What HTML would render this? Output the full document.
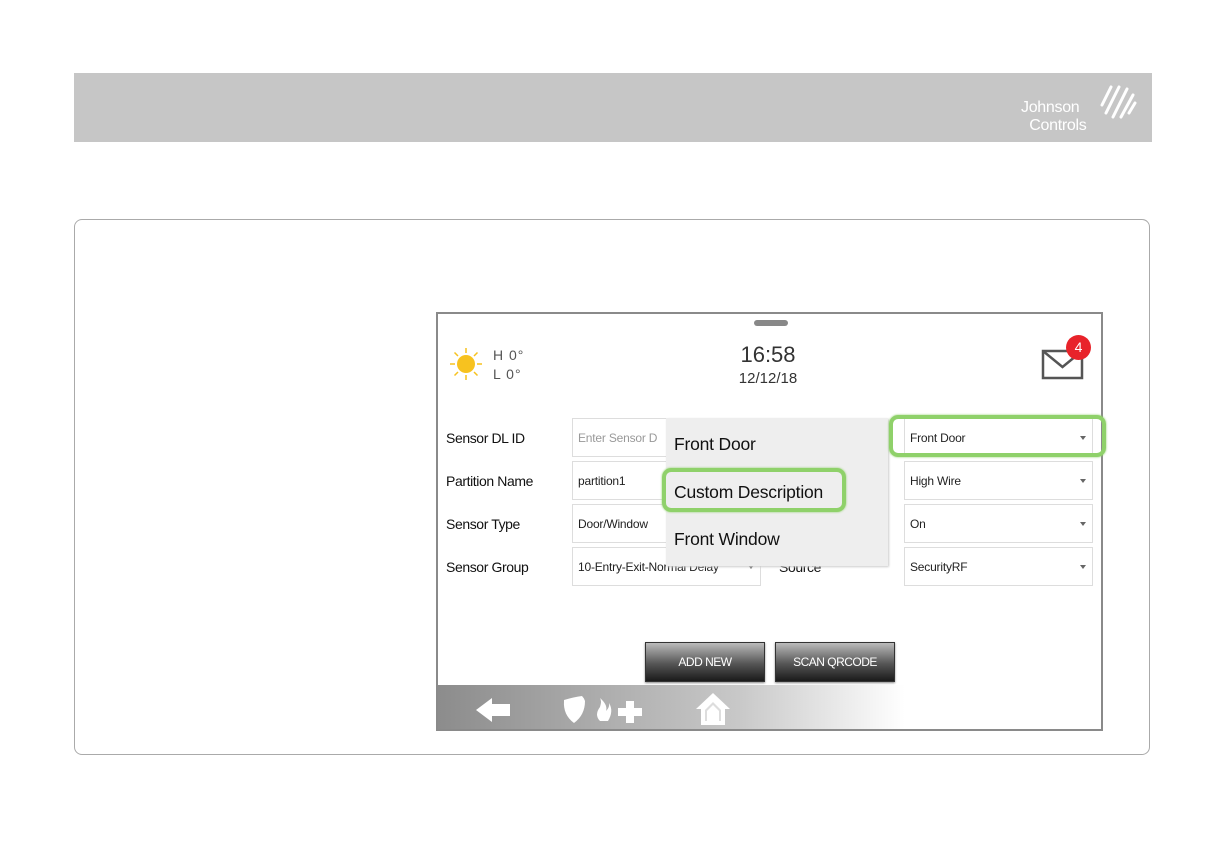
<!DOCTYPE html>
<html><head><meta charset="utf-8"><style>
*{margin:0;padding:0;box-sizing:border-box}
body{width:1224px;height:864px;background:#fff;position:relative;font-family:"Liberation Sans",sans-serif;overflow:hidden}
.a{position:absolute}
.hdr{left:74px;top:73px;width:1078px;height:69px;background:#c6c6c6}
.card{left:74px;top:219px;width:1076px;height:536px;border:1px solid #aaa;border-radius:8px}
.scr{left:436px;top:312px;width:667px;height:419px;border:2px solid #8a8a8a;background:#fff;overflow:hidden}
.lbl{font-size:14px;color:#111;letter-spacing:-0.4px}
.box{border:1px solid #ddd;background:#fff;font-size:12px;color:#222;padding-left:5px;display:flex;align-items:center;letter-spacing:-0.2px}
.car{position:absolute;right:6px;top:17px;border-left:3px solid transparent;border-right:3px solid transparent;border-top:4px solid #666}
.btn{background:linear-gradient(#bbb,#555 55%,#1a1a1a);color:#fff;font-size:12px;display:flex;align-items:center;justify-content:center;border:1px solid #333;letter-spacing:-0.5px;box-shadow:0 1px 2px #888}
.mi{font-size:17.5px;color:#111;left:8px;letter-spacing:-0.2px}
</style></head><body>
<div class="a hdr"></div>
<div class="a" style="left:1021px;top:99px;color:#fff;font-size:16px;line-height:18px;letter-spacing:-0.3px">Johnson<br>&nbsp;&nbsp;Controls</div>
<svg class="a" style="left:1097px;top:83px" width="40" height="38" viewBox="0 0 40 38"><g stroke="#fff" stroke-width="3" fill="none" stroke-linecap="round"><path d="M5 22 L14 4"/><path d="M9 30 L22 4"/><path d="M16 34 L30 6"/><path d="M24 34 L36 12"/><path d="M32 30 L38 20"/></g></svg>
<div class="a card"></div>
<div class="a scr">
 <div class="a" style="left:316px;top:6px;width:34px;height:6px;border-radius:3px;background:#888"></div>
 <svg class="a" style="left:10px;top:32px" width="36" height="36" viewBox="0 0 36 36"><circle cx="18" cy="18" r="9" fill="#f7c21f"/><g stroke="#f7c21f" stroke-width="1.5"><path d="M18 2v5M18 29v5M2 18h5M29 18h5M6.5 6.5l3.5 3.5M26 26l3.5 3.5M6.5 29.5l3.5-3.5M26 10l3.5-3.5"/></g></svg>
 <div class="a" style="left:55px;top:32px;font-size:14px;color:#555;line-height:19px;letter-spacing:1px">H 0°<br>L 0°</div>
 <div class="a" style="left:290px;top:28px;width:80px;text-align:center;font-size:22px;color:#333">16:58</div>
 <div class="a" style="left:290px;top:56px;width:80px;text-align:center;font-size:15px;color:#333">12/12/18</div>
 <svg class="a" style="left:603px;top:34px" width="44" height="32" viewBox="0 0 44 32"><rect x="2" y="3" width="39" height="27" fill="none" stroke="#555" stroke-width="2.5"/><path d="M2 3 L21.5 19 L41 3" fill="none" stroke="#555" stroke-width="2.5"/></svg>
 <div class="a" style="left:628px;top:21px;width:25px;height:25px;border-radius:50%;background:#e8232a;color:#fff;font-size:14px;text-align:center;line-height:25px">4</div>
 <div class="a lbl" style="left:8px;top:116px">Sensor DL ID</div>
 <div class="a lbl" style="left:8px;top:159px">Partition Name</div>
 <div class="a lbl" style="left:8px;top:202px">Sensor Type</div>
 <div class="a lbl" style="left:8px;top:245px">Sensor Group</div>
 <div class="a box" style="left:134px;top:104px;width:189px;height:39px;color:#999">Enter Sensor D</div>
 <div class="a box" style="left:134px;top:147px;width:189px;height:39px">partition1</div>
 <div class="a box" style="left:134px;top:190px;width:189px;height:39px">Door/Window</div>
 <div class="a box" style="left:134px;top:233px;width:189px;height:39px">10-Entry-Exit-Normal Delay<span class="car"></span></div>
 <div class="a lbl" style="left:341px;top:245px">Source</div>
 <div class="a box" style="left:466px;top:104px;width:189px;height:39px">Front Door<span class="car"></span></div>
 <div class="a box" style="left:466px;top:147px;width:189px;height:39px">High Wire<span class="car"></span></div>
 <div class="a box" style="left:466px;top:190px;width:189px;height:39px">On<span class="car"></span></div>
 <div class="a box" style="left:466px;top:233px;width:189px;height:39px">SecurityRF<span class="car"></span></div>
 <div class="a" style="left:228px;top:104px;width:222px;height:148px;background:#eee;box-shadow:1px 1px 2px #ccc">
  <div class="a mi" style="top:16px">Front Door</div>
  <div class="a mi" style="top:64px">Custom Description</div>
  <div class="a mi" style="top:111px">Front Window</div>
 </div>
 <div class="a" style="left:224px;top:154px;width:184px;height:44px;border:4px solid #8fd16a;border-radius:9px;box-shadow:0 0 2px #8fd16a"></div>
 <div class="a btn" style="left:207px;top:328px;width:120px;height:40px">ADD NEW</div>
 <div class="a btn" style="left:337px;top:328px;width:120px;height:40px">SCAN QRCODE</div>
 <div class="a" style="left:0;top:371px;width:667px;height:46px;background:linear-gradient(90deg,#8c8c8c,#c8c8c8 45%,#fff 70%)"></div>
 <svg class="a" style="left:36px;top:381px" width="40" height="30" viewBox="0 0 40 30"><path d="M2 15 L18 3 L18 9 L36 9 L36 21 L18 21 L18 27 Z" fill="#fff"/></svg>
 <svg class="a" style="left:124px;top:381px" width="90" height="30" viewBox="0 0 90 30"><path d="M2 5 Q12 2 20 1 Q22 3 23 6 Q23 20 12 28 Q1 20 2 6Z" fill="#fff"/><path d="M38 26 Q32 20 38 12 Q40 6 38 3 Q46 10 44 16 Q48 12 47 8 Q52 16 46 26 Z" fill="#fff"/><path d="M64 6h8v7h8v8h-8v7h-8v-7h-8v-8h8z" fill="#fff"/></svg>
 <svg class="a" style="left:256px;top:377px" width="38" height="36" viewBox="0 0 38 36"><path d="M19 2 L36 18 L31 18 L31 34 L7 34 L7 18 L2 18 Z" fill="#fff"/><path d="M11 19 L19 11 L27 19 L27 30 L11 30Z" fill="#ddd"/><path d="M13 20 L19 14 L25 20 L25 34 L13 34Z" fill="#fff"/></svg>
</div>
<div class="a" style="left:889px;top:415px;width:217px;height:42px;border:4px solid #8fd16a;border-radius:9px;box-shadow:0 0 2px #8fd16a"></div>
</body></html>
